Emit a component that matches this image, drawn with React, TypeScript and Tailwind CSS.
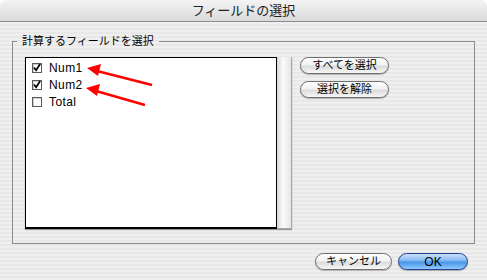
import { useState } from "react";

const font = { fontFamily: '"Liberation Sans", "Noto Sans CJK JP", sans-serif' };

function CheckRow({ label, checked }: { label: string; checked: boolean }) {
  return (
    <div className="flex items-center h-[17px] pl-[6px] gap-[7px]">
      <span className="w-[10px] h-[10px] border border-[#5a5a5a] bg-white flex items-center justify-center shadow-[inset_1px_1px_0_#cfcfcf]">
        {checked && (
          <svg width="9" height="9" viewBox="0 0 9 9">
            <path d="M1 4.5 L3.5 7.5 L8 0.5" fill="none" stroke="#000" strokeWidth="2" />
          </svg>
        )}
      </span>
      <span className="text-[12px] tracking-[0.4px] text-black leading-none">{label}</span>
    </div>
  );
}

function PillButton({ label, className = "" }: { label: string; className?: string }) {
  return (
    <button
      className={`h-[17px] rounded-full border border-[#6e6e6e] bg-[linear-gradient(to_bottom,#ffffff_0%,#f2f2f2_45%,#dcdcdc_55%,#f6f6f6_100%)] shadow-[0_1px_1px_rgba(0,0,0,0.25)] text-[11px] leading-none text-black flex items-center justify-center ${className}`}
    >
      {label}
    </button>
  );
}

export default function App() {
  const [fields] = useState([
    { label: "Num1", checked: true },
    { label: "Num2", checked: true },
    { label: "Total", checked: false },
  ]);

  return (
    <div className="relative w-[487px] h-[280px] overflow-hidden bg-white" style={font}>
      <div className="h-[22px] rounded-t-[6px] border-b border-[#8c8c8c] bg-[linear-gradient(to_bottom,#f4f4f4,#dadada)] flex items-center justify-center">
        <span className="text-[13px] text-[#202020]">フィールドの選択</span>
      </div>

      <div className="h-[258px] bg-[repeating-linear-gradient(to_bottom,#efefef_0px,#efefef_2px,#e8e8e8_2px,#e8e8e8_4px)] pt-[12px] px-[12px] flex flex-col">
        <fieldset className="border border-[#8a8a8a] pl-[4px] pt-[9px] pb-[13px] h-[210px]">
          <legend className="px-[5px] text-[11px] leading-[14px] text-black">計算するフィールドを選択</legend>
          <div className="flex pl-[8px] gap-[8px]">
            <div className="flex shadow-[0_1px_1px_rgba(0,0,0,0.35)]">
              <div className="w-[252px] h-[172px] bg-white border border-black border-b-2 pt-[1px]">
                {fields.map((f) => (
                  <CheckRow key={f.label} label={f.label} checked={f.checked} />
                ))}
              </div>
              <div className="w-[15px] h-[172px] border-r border-b border-[#a8a8a8] bg-[linear-gradient(to_right,#d9d9d9,#fbfbfb_45%,#e6e6e6)]" />
            </div>
            <div className="flex flex-col gap-[7px] w-[89px]">
              <PillButton label="すべてを選択" />
              <PillButton label="選択を解除" />
            </div>
          </div>
        </fieldset>

        <div className="flex justify-end gap-[6px] mt-[9px] pr-[7px]">
          <PillButton label="キャンセル" className="w-[77px]" />
          <button className="w-[70px] h-[17px] rounded-full border border-[#24408f] bg-[linear-gradient(to_bottom,#c9e1fb_0%,#8dbef2_40%,#4a96e8_55%,#8fcaff_100%)] shadow-[0_1px_1px_rgba(0,0,0,0.3)] text-[12px] leading-none text-black flex items-center justify-center">
            OK
          </button>
        </div>
      </div>

      <svg className="absolute inset-0 pointer-events-none" width="487" height="280" viewBox="0 0 487 280">
        <line x1="152" y1="85" x2="97" y2="71" stroke="#ff0000" strokeWidth="2.4" />
        <polygon points="87,68 101,64 98,76" fill="#ff0000" />
        <line x1="145" y1="105" x2="96" y2="91" stroke="#ff0000" strokeWidth="2.4" />
        <polygon points="86,88 100,84 97,96" fill="#ff0000" />
      </svg>
    </div>
  );
}
